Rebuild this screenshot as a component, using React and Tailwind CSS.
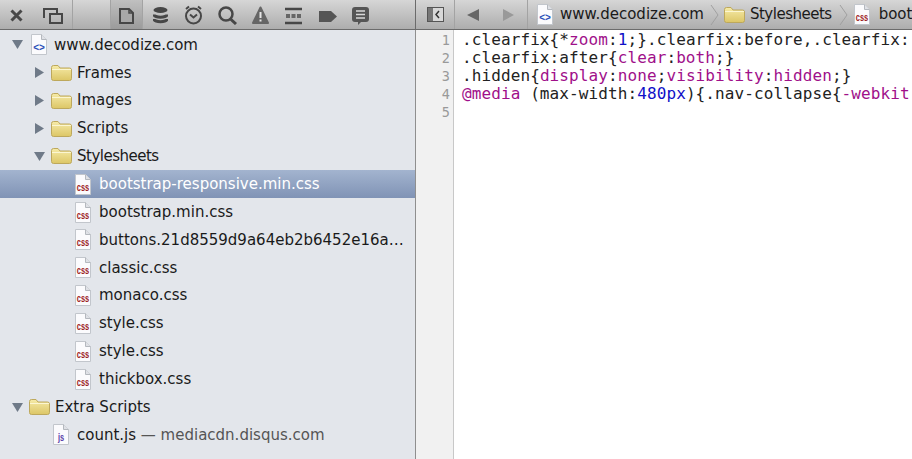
import React from 'react';

const FileIcon = ({ kind }) => {
    const label = kind === 'html' ? '<>' : kind;
    const color = kind === 'html' ? '#2a4fb8' : kind === 'js' ? '#5a3ea8' : '#9c1c24';
    return (
        <svg width="16" height="21" viewBox="0 0 16 21" className="shrink-0">
            <path d="M.5.5h10l5 5v15H.5z" fill="#fbfbfd" stroke="#c2c6cc" />
            <path d="M10.5.5v5h5" fill="#dfe1e6" stroke="#b4b8be" />
            <text transform={kind === 'html' ? 'translate(8 17)' : 'translate(8 17) scale(.68 1)'} textAnchor="middle" fontSize={kind === 'html' ? 10 : 11} fontWeight="700" fill={color} fontFamily="'Liberation Sans', sans-serif">{label}</text>
        </svg>
    );
};

const Folder = () => (
    <svg width="21" height="16" viewBox="0 0 21 16" className="shrink-0">
        <defs>
            <linearGradient id="folderFill" x1="0" y1="0" x2="0" y2="1">
                <stop offset="0" stopColor="#f6eba8" />
                <stop offset="1" stopColor="#dcc666" />
            </linearGradient>
        </defs>
        <path d="M.5 2.5a2 2 0 0 1 2-2h4.5l2 2.5h9.500a2 2 0 0 1 2 2v8.500a2 2 0 0 1-2 2h-16a2 2 0 0 1-2-2z" fill="url(#folderFill)" stroke="#bda85c" />
        <path d="M1 4.500h19" stroke="#fbf6d2" />
    </svg>
);

const Arrow = ({ open }) => (
    <svg width="11" height="11" viewBox="0 0 11 11" className="shrink-0">
        {open ? <path d="M0 1h11L5.500 10z" fill="#6f7a88" /> : <path d="M1 0l9 5.500-9 5.500z" fill="#6f7a88" />}
    </svg>
);

const Row = ({ indent, arrow, icon, selected, gap = 'mr-[5px]', children }) => (
    <div className={`flex h-[27.86px] items-center ${indent} ${selected ? 'bg-gradient-to-b from-[#a3b4cf] to-[#8093b5] text-white' : ''}`}>
        {arrow && <span className="mr-[5px] flex w-[11px] shrink-0"><Arrow open={arrow === 'open'} /></span>}
        <span className={`${gap} flex w-[22px] shrink-0 justify-center`}>{icon}</span>
        <span className="truncate">{children}</span>
    </div>
);

// toolbar glyph, 21px tall so its y coordinates line up with the bar
const ToolIcon = ({ w, className, children }) => (
    <svg width={w} height="21" viewBox={`0 0 ${w} 21`} fill="none" stroke="#474747" strokeWidth="2" className={`shrink-0 ${className}`}>{children}</svg>
);

const Sep = ({ className }) => <span className={`h-[29px] w-px shrink-0 bg-[#a3a3a3] ${className}`} />;

const Chevron = ({ className }) => (
    <svg width="9" height="26" viewBox="0 0 9 26" className={`shrink-0 ${className}`}><path d="M1 3l7 10-7 10" fill="none" stroke="#a0a0a0" /></svg>
);

const files = ['bootstrap.min.css', 'buttons.21d8559d9a64eb2b6452e16a4c0ff1a2.css', 'classic.css', 'monaco.css', 'style.css', 'style.css', 'thickbox.css'];

const Attr = ({ children }) => <span className="text-[#a0108a]">{children}</span>;
const Num = ({ children }) => <span className="text-[#1010c8]">{children}</span>;

export default function App() {
    return (
        <div className="flex h-[459px] w-[912px] flex-col overflow-hidden bg-white text-[15px] text-[#1a1a1a] font-['DejaVu_Sans',sans-serif]">
            <div className="flex h-[30px] shrink-0 border-b border-[#6b6b6b] bg-gradient-to-b from-[#d6d6d6] to-[#adadad]">
                <div className="flex w-[416px] shrink-0 items-center border-r border-[#6b6b6b]">
                    <ToolIcon w={13} className="ml-[10px]"><path d="M1.500 6.500l10 10M11.500 6.500l-10 10" strokeWidth="3" /></ToolIcon>
                    <ToolIcon w={20} className="ml-[20px]">
                        <path d="M1 14V5h13v4" />
                        <path d="M7 10h12v9H7z" />
                    </ToolIcon>
                    <Sep className="ml-[9px]" />
                    <Sep className="ml-[37px]" />
                    <div className="flex h-[29px] w-[31px] shrink-0 items-center justify-center bg-black/10">
                        <ToolIcon w={15}>
                            <path d="M1 5h9l4 4v10H1z" fill="#a8a8a8" />
                            <path d="M10 5v4h4" strokeWidth="1.500" />
                        </ToolIcon>
                    </div>
                    <Sep />
                    <ToolIcon w={15} className="ml-[10px]">
                        <ellipse cx="7.500" cy="6" rx="7" ry="3" fill="#474747" stroke="none" />
                        <path d="M1 10.500c0 3.500 13 3.500 13 0M1 15c0 3.500 13 3.500 13 0" strokeWidth="3" />
                    </ToolIcon>
                    <ToolIcon w={19} className="ml-[16px]">
                        <circle cx="9.500" cy="12" r="7.500" />
                        <path d="M6 10.500l3.500 3 3.500-3M2 5l3-2.500M17 5l-3-2.500" />
                    </ToolIcon>
                    <ToolIcon w={19} className="ml-[15px]">
                        <circle cx="8" cy="10" r="6.500" strokeWidth="2.500" />
                        <path d="M12.500 15l5.500 5" strokeWidth="3" />
                    </ToolIcon>
                    <ToolIcon w={17} className="ml-[15px]">
                        <path d="M8.500 3.500l7.500 15.500H1z" fill="#666" stroke="#666" strokeLinejoin="round" />
                        <path d="M8.500 8v6M8.500 15.500v2" stroke="#e6e6e6" />
                    </ToolIcon>
                    <ToolIcon w={17} className="ml-[16px]">
                        <path d="M0 5h17M0 19h17" strokeWidth="2.500" />
                        <path d="M1 12h15" strokeWidth="4" strokeDasharray="4 1.500" stroke="#666" />
                    </ToolIcon>
                    <ToolIcon w={18} className="ml-[17px]"><path d="M0 7h12l6 5.500-6 5.500H0z" fill="#555" stroke="none" /></ToolIcon>
                    <ToolIcon w={17} className="ml-[15px]">
                        <path d="M3 3h11a3 3 0 0 1 3 3v9a3 3 0 0 1-3 3H9l-3 3v-3H3a3 3 0 0 1-3-3V6a3 3 0 0 1 3-3z" fill="#555" stroke="none" />
                        <path d="M4 7h9M4 10.500h9M4 14h9" stroke="#d8d8d8" strokeWidth="1.500" />
                    </ToolIcon>
                </div>
                <div className="flex min-w-0 flex-1 items-center overflow-hidden whitespace-nowrap">
                    <svg width="17" height="15" viewBox="0 0 17 15" className="ml-[11px] shrink-0">
                        <rect x=".5" y=".5" width="16" height="14" fill="#d8d8d8" stroke="#555" />
                        <rect x="1" y="1" width="5" height="13" fill="#777" />
                        <path d="M12 4l-3 3.500 3 3.500" fill="none" stroke="#333" strokeWidth="1.500" />
                    </svg>
                    <Sep className="ml-[10px]" />
                    <svg width="12" height="12" viewBox="0 0 12 12" className="ml-[12px] shrink-0"><path d="M12 0v12L0 6z" fill="#666" /></svg>
                    <svg width="11" height="12" viewBox="0 0 11 12" className="ml-[24px] shrink-0"><path d="M0 0v12l11-6z" fill="#999" /></svg>
                    <Sep className="ml-[13px]" />
                    <span className="ml-[9px] flex shrink-0"><FileIcon kind="html" /></span>
                    <span className="ml-[7px]">www.decodize.com</span>
                    <Chevron className="ml-[6px]" />
                    <span className="ml-[5px] flex shrink-0"><Folder /></span>
                    <span className="ml-[5px] tracking-[-0.5px]">Stylesheets</span>
                    <Chevron className="ml-[7px]" />
                    <span className="ml-[6px] flex shrink-0"><FileIcon kind="css" /></span>
                    <span className="ml-[9px]">boot</span>
                </div>
            </div>

            <div className="flex min-h-0 flex-1">
                <div className="w-[416px] shrink-0 border-r border-[#8f8f8f] bg-[#e3e6eb] pt-[1px]">
                    <Row indent="pl-[12px]" arrow="open" gap="mr-[4px]" icon={<FileIcon kind="html" />}>www.decodize.com</Row>
                    <Row indent="pl-[34px]" arrow="closed" icon={<Folder />}>Frames</Row>
                    <Row indent="pl-[34px]" arrow="closed" icon={<Folder />}>Images</Row>
                    <Row indent="pl-[34px]" arrow="closed" icon={<Folder />}>Scripts</Row>
                    <Row indent="pl-[34px]" arrow="open" icon={<Folder />}><span className="tracking-[-0.5px]">Stylesheets</span></Row>
                    <Row indent="pl-[72px]" selected icon={<FileIcon kind="css" />}>bootstrap-responsive.min.css</Row>
                    {files.map((name, i) => (
                        <Row key={i} indent="pl-[72px] pr-[8px]" icon={<FileIcon kind="css" />}>{name}</Row>
                    ))}
                    <Row indent="pl-[12px]" arrow="open" icon={<Folder />}>Extra Scripts</Row>
                    <Row indent="pl-[50px]" icon={<FileIcon kind="js" />}>count.js <span className="text-[#555]">— mediacdn.disqus.com</span></Row>
                </div>
                <div className="flex min-w-0 flex-1 pt-[1px] text-[16px] leading-[18px] tracking-[0.1px] font-['DejaVu_Sans_Mono',monospace]">
                    <div className="-mt-[1px] w-[38px] shrink-0 border-r border-[#c8c8c8] bg-[#f1f1f1] pt-[1px] pr-[3px] text-right text-[13.5px] text-[#999]">
                        {[1, 2, 3, 4, 5].map(n => <div key={n}>{n}</div>)}
                    </div>
                    <div className="min-w-0 flex-1 whitespace-pre pl-[8px] text-[#222]">
                        <div>.clearfix{'{'}*<Attr>zoom</Attr>:<Num>1</Num>;{'}'}.clearfix:before,.clearfix:</div>
                        <div>.clearfix:after{'{'}<Attr>clear</Attr>:<Attr>both</Attr>;{'}'}</div>
                        <div>.hidden{'{'}<Attr>display</Attr>:<Attr>none</Attr>;<Attr>visibility</Attr>:<Attr>hidden</Attr>;{'}'}</div>
                        <div><Attr>@media</Attr> (max-width:<Num>480px</Num>){'{'}.nav-collapse{'{'}<Attr>-webkit</Attr></div>
                    </div>
                </div>
            </div>
        </div>
    );
}
